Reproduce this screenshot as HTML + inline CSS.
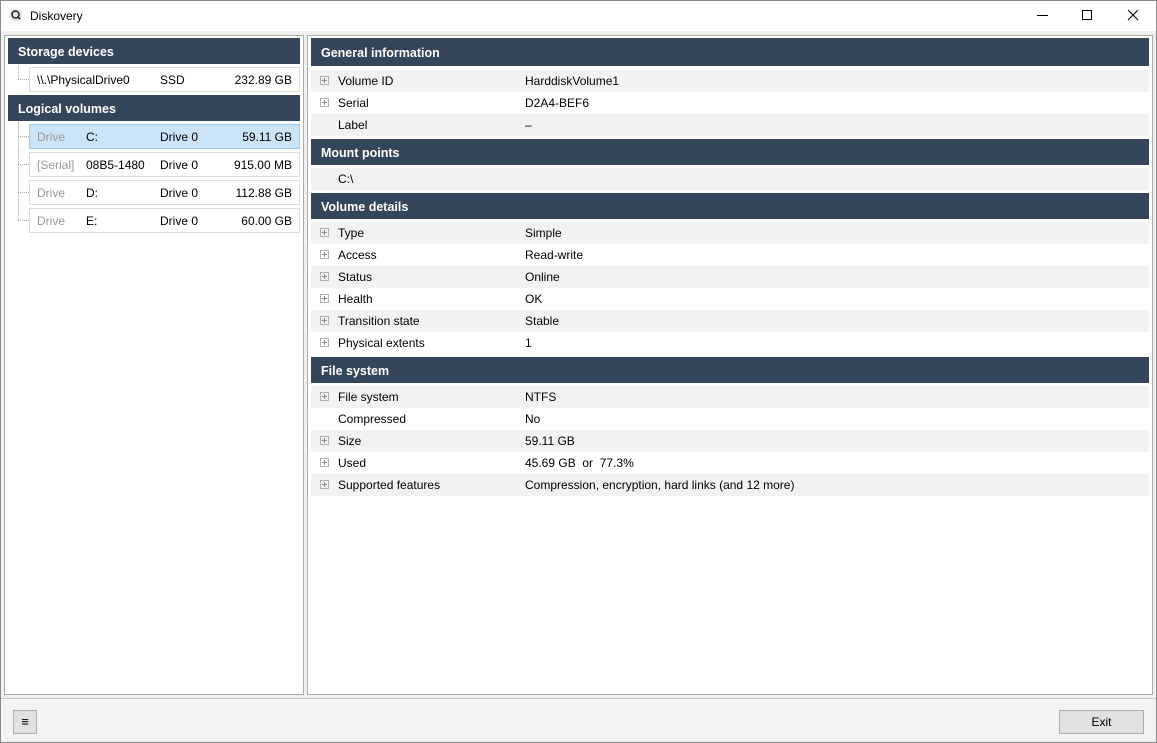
<!DOCTYPE html>
<html><head><meta charset="utf-8"><style>
*{margin:0;padding:0;box-sizing:border-box}
body{width:1157px;height:743px;overflow:hidden;background:#f0f0f0;font-family:"Liberation Sans",sans-serif;font-size:12px;color:#000;position:relative}
.a{position:absolute}
.win{left:0;top:0;width:1157px;height:743px;border:1px solid #8a8a8a}
.title{left:1px;top:1px;width:1155px;height:30px;background:#fff}
.hdr{position:absolute;background:#36465a;color:#fff;font-weight:bold;font-size:12.5px;padding-left:10px;line-height:28px}
.row{position:absolute;left:311px;width:838px;height:22px;line-height:22px;font-size:12px}
.row.g{background:#f1f2f4}
.row .pl{position:absolute;left:9px;top:6px;width:9px;height:9px;border:1px solid #b0b0b0}
.row .pl:before{content:"";position:absolute;left:1px;top:3px;width:5px;height:1px;background:#888}
.row .pl:after{content:"";position:absolute;left:3px;top:1px;width:1px;height:5px;background:#888}
.row .k{position:absolute;left:27px}
.row .v{position:absolute;left:214px}
.item{position:absolute;left:29px;width:271px;height:25px;border:1px solid #dcdcdc;background:#fff;line-height:24px}
.item span{position:absolute}
.dot{position:absolute;border-color:#aaa;border-style:dotted;border-width:0}
</style></head><body>
<div class="a win"></div>
<div class="a title"></div>
<svg class="a" style="left:9px;top:8px" width="14" height="14" viewBox="0 0 14 14"><circle cx="7" cy="7" r="6.5" fill="#e6e6e6"/><circle cx="6.5" cy="6.5" r="3.5" fill="none" stroke="#222" stroke-width="1.5"/><path d="M8.5 8.5 L11 11" stroke="#222" stroke-width="1.6"/></svg>
<div class="a" style="left:30px;top:9px;font-size:12px">Diskovery</div>
<div class="a" style="left:1037px;top:15px;width:11px;height:1px;background:#000"></div>
<div class="a" style="left:1082px;top:10px;width:10px;height:10px;border:1px solid #000"></div>
<svg class="a" style="left:1127px;top:9px" width="12" height="12"><path d="M1 1L11 11M11 1L1 11" stroke="#000" stroke-width="1"/></svg>

<div class="a" style="left:4px;top:35px;width:300px;height:660px;background:#fff;border:1px solid #acacac"></div>
<div class="a" style="left:307px;top:35px;width:846px;height:660px;background:#fff;border:1px solid #acacac"></div>

<div class="hdr" style="left:8px;top:38px;width:292px;height:26px">Storage devices</div>
<div class="dot" style="left:18px;top:66px;height:13px;border-left-width:1px"></div>
<div class="dot" style="left:18px;top:79px;width:11px;border-top-width:1px"></div>
<div class="item" style="top:67px"><span style="left:7px">\\.\PhysicalDrive0</span><span style="left:130px">SSD</span><span style="right:7px">232.89 GB</span></div>
<div class="hdr" style="left:8px;top:95px;width:292px;height:26px">Logical volumes</div>
<div class="dot" style="left:18px;top:122px;height:98px;border-left-width:1px"></div>
<div class="dot" style="left:18px;top:136px;width:11px;border-top-width:1px"></div>
<div class="dot" style="left:18px;top:164px;width:11px;border-top-width:1px"></div>
<div class="dot" style="left:18px;top:192px;width:11px;border-top-width:1px"></div>
<div class="dot" style="left:18px;top:220px;width:11px;border-top-width:1px"></div>
<div class="item" style="top:124px;background:#cce4f7;border-color:#99c9ef"><span style="left:7px;color:#999">Drive</span><span style="left:56px">C:</span><span style="left:130px">Drive 0</span><span style="right:7px">59.11 GB</span></div>
<div class="item" style="top:152px"><span style="left:7px;color:#999">[Serial]</span><span style="left:56px">08B5-1480</span><span style="left:130px">Drive 0</span><span style="right:7px">915.00 MB</span></div>
<div class="item" style="top:180px"><span style="left:7px;color:#999">Drive</span><span style="left:56px">D:</span><span style="left:130px">Drive 0</span><span style="right:7px">112.88 GB</span></div>
<div class="item" style="top:208px"><span style="left:7px;color:#999">Drive</span><span style="left:56px">E:</span><span style="left:130px">Drive 0</span><span style="right:7px">60.00 GB</span></div>

<div class="hdr" style="left:311px;top:38px;width:838px;height:28px;line-height:30px">General information</div>
<div class="row g" style="top:70px"><i class="pl"></i><span class="k">Volume ID</span><span class="v">HarddiskVolume1</span></div>
<div class="row" style="top:92px"><i class="pl"></i><span class="k">Serial</span><span class="v">D2A4-BEF6</span></div>
<div class="row g" style="top:114px"><span class="k">Label</span><span class="v">–</span></div>
<div class="hdr" style="left:311px;top:139px;width:838px;height:26px">Mount points</div>
<div class="row g" style="top:168px"><span class="k">C:\</span></div>
<div class="hdr" style="left:311px;top:193px;width:838px;height:26px">Volume details</div>
<div class="row g" style="top:222px"><i class="pl"></i><span class="k">Type</span><span class="v">Simple</span></div>
<div class="row" style="top:244px"><i class="pl"></i><span class="k">Access</span><span class="v">Read-write</span></div>
<div class="row g" style="top:266px"><i class="pl"></i><span class="k">Status</span><span class="v">Online</span></div>
<div class="row" style="top:288px"><i class="pl"></i><span class="k">Health</span><span class="v">OK</span></div>
<div class="row g" style="top:310px"><i class="pl"></i><span class="k">Transition state</span><span class="v">Stable</span></div>
<div class="row" style="top:332px"><i class="pl"></i><span class="k">Physical extents</span><span class="v">1</span></div>
<div class="hdr" style="left:311px;top:357px;width:838px;height:26px">File system</div>
<div class="row g" style="top:386px"><i class="pl"></i><span class="k">File system</span><span class="v">NTFS</span></div>
<div class="row" style="top:408px"><span class="k">Compressed</span><span class="v">No</span></div>
<div class="row g" style="top:430px"><i class="pl"></i><span class="k">Size</span><span class="v">59.11 GB</span></div>
<div class="row" style="top:452px"><i class="pl"></i><span class="k">Used</span><span class="v">45.69 GB&nbsp; or&nbsp; 77.3%</span></div>
<div class="row g" style="top:474px"><i class="pl"></i><span class="k">Supported features</span><span class="v">Compression, encryption, hard links (and 12 more)</span></div>

<div class="a" style="left:1px;top:698px;width:1155px;height:44px;background:#f2f3f5;border-top:1px solid #c8c8c8"></div>
<div class="a" style="left:13px;top:710px;width:24px;height:24px;background:#e1e1e1;border:1px solid #adadad;text-align:center;line-height:22px;font-size:13px;font-weight:bold">≡</div>
<div class="a" style="left:1059px;top:710px;width:85px;height:24px;background:#e1e1e1;border:1px solid #adadad;text-align:center;line-height:22px">Exit</div>
</body></html>
